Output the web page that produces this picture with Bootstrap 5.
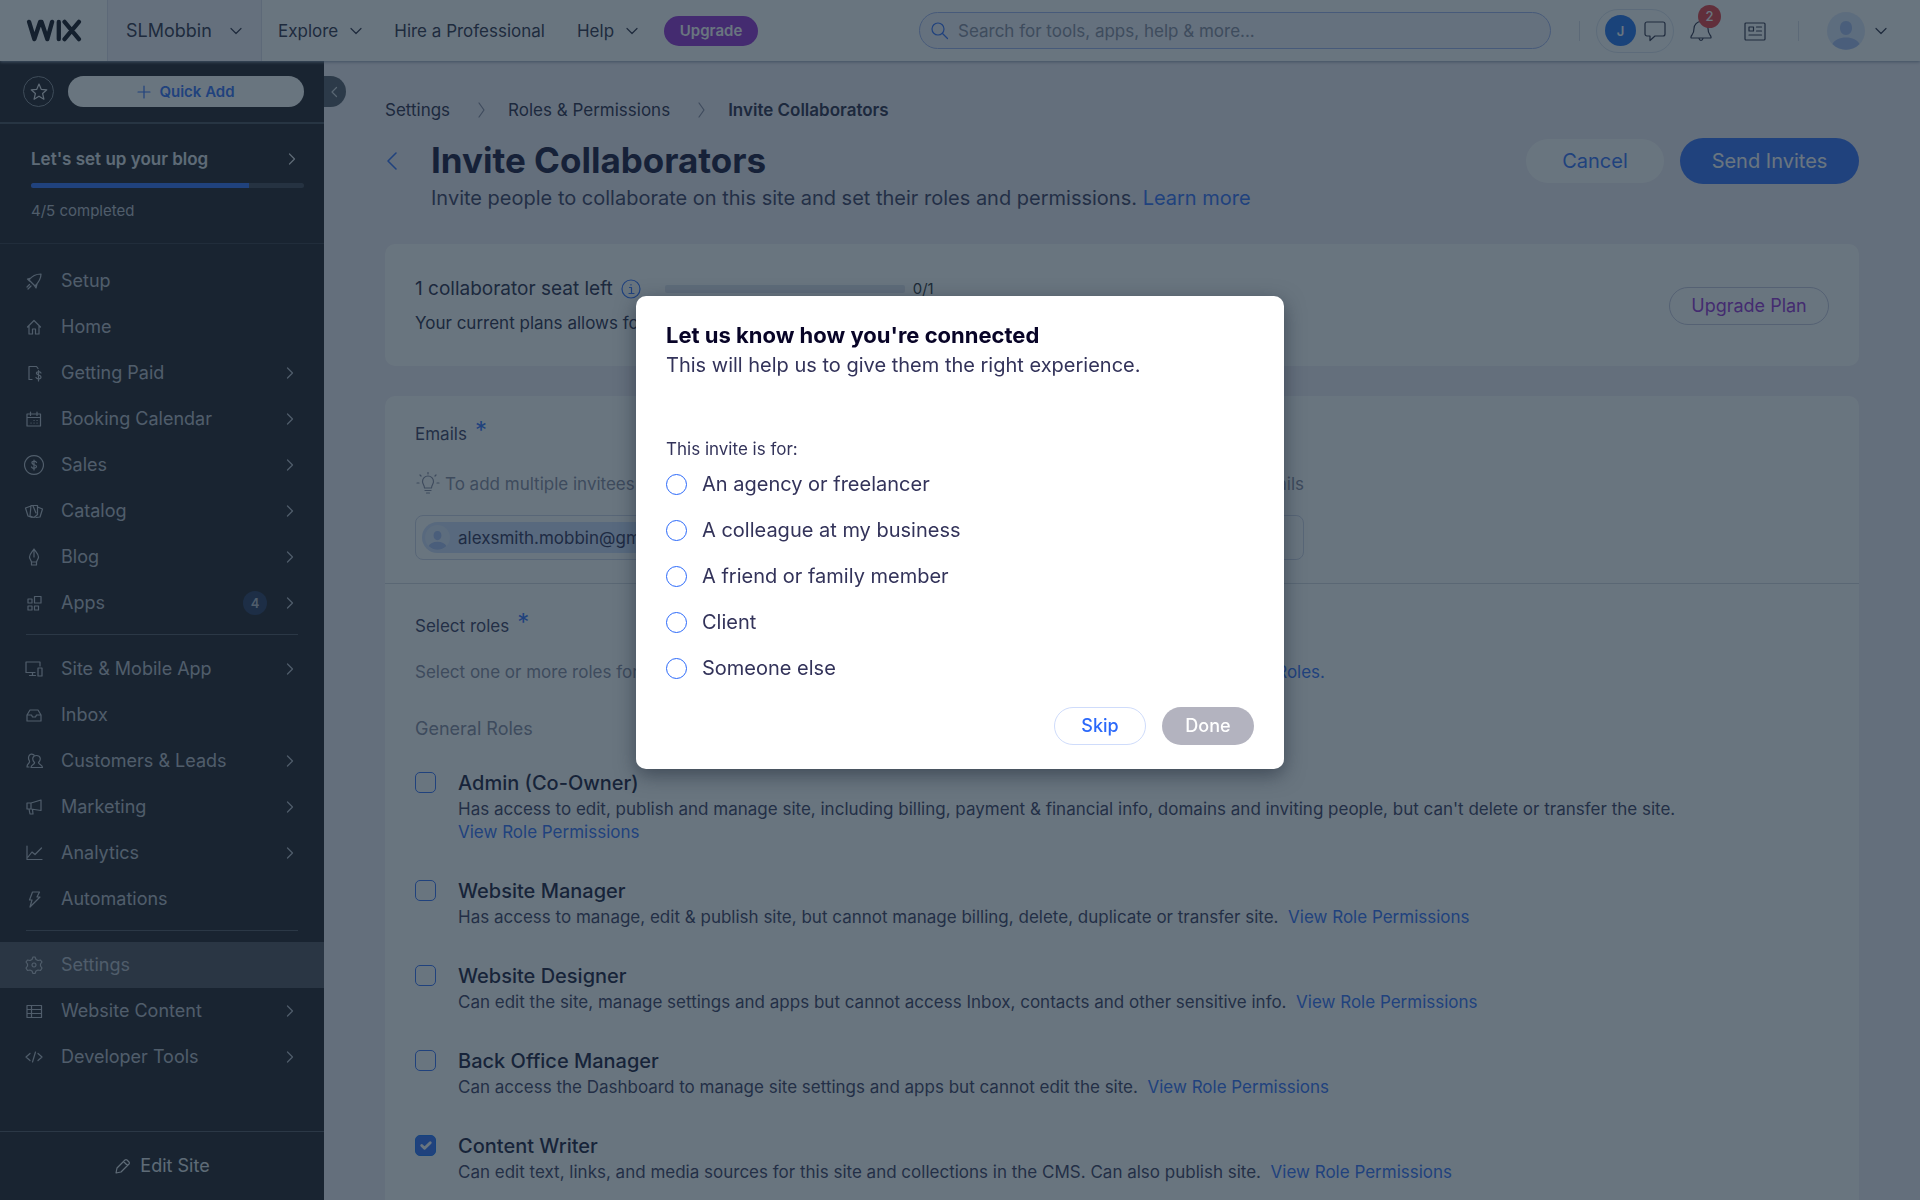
<!DOCTYPE html>
<html lang="en">
<head>
<meta charset="utf-8">
<meta name="viewport" content="width=device-width, initial-scale=1">
<title>Invite Collaborators</title>
<link rel="stylesheet" href="https://cdn.jsdelivr.net/npm/bootstrap@5.3.0/dist/css/bootstrap.min.css">
<style>
:root{--blue:#2b69fa;--ink:#14123a;--body:#33335a;--purple:#9226d2}
body{font-family:Inter,"Liberation Sans",sans-serif;font-size:17px;line-height:24px;color:var(--body);background:#f0ecf5}
a{color:var(--blue);text-decoration:none}
svg{fill:none;stroke:currentColor;stroke-width:1.2;stroke-linecap:round;stroke-linejoin:round;flex:none}
.chev{width:12px;height:12px}
.btn{--bs-btn-line-height:24px;border-radius:30px}
/* top bar */
.topbar{height:61px;background:#fff;box-shadow:0 1px 3px #8894ac;z-index:2;color:#26263f}
.topbar a{color:inherit}
.brandbox{width:107px}
.topbar .brandbox{color:#080814}
.sitebox{width:155px;background:#f3f1f9;border:solid #dcdcea;border-width:0 1px;padding:0 19px 0 18px;font-size:18px}
.upbtn{background:var(--purple);color:#fff;font-size:15px;font-weight:600;height:30px;width:94px;margin-left:26px}
.searchbox{width:632px;height:37px;border:1px solid #9db1f0;border-radius:19px;background:#f3f2fb;padding:0 10px}
.searchbox input{background:none;font-size:17px}
.searchbox input::placeholder{color:#82869c;opacity:1}
.vline{width:1px;height:20px;background:#d8dbe6}
.account{margin-left:32px;gap:28px}
.account a{gap:10px}
.top-end{padding-right:33px}
.chatpill{width:78px;height:44px;border:1px solid #dbe2ef;border-radius:22px}
.initial{width:31px;height:31px;border-radius:50%;background:#1a6cf0;color:#fff;font-size:13px;font-weight:600}
.count{top:-13px;left:8px;width:23px;height:23px;border-radius:50%;background:#e6333a;color:#fff;font-size:13px;font-weight:500}
/* side menu */
.side{width:324px;background:#17141c;color:#fff}
.side a{color:#b5b9c4}
.side-top{padding:15px 20px 15px 23px;gap:14px;border-bottom:2px solid #3e4450}
.starbtn{width:31px;height:31px;border:1px solid #80848e;color:#e0e0e6}
.quick{height:31px;background:#fff;color:var(--blue);font-size:15px;font-weight:600}
.setup-box{padding:23px 20px 20px 31px;border-bottom:1px solid #2c2d38}
.side .setup-title{color:#dfe0e6;font-weight:600;padding-right:6px}
.side .progress{height:5px;background:#3a3d49;margin-top:12px}
.side .progress-bar{background:var(--blue)}
.setup-note{font-size:15px;color:#b5b9c4;margin-top:11px}
.menu-group{padding-top:14px}
.menu-group a{height:46px;padding:0 28px 0 24px;font-size:18px;gap:17px}
.menu-group a.active{background:#484852}
.menu-line{margin:8px 26px 11px 26px;height:1px;background:#494d59}
.pillcount{width:24px;height:24px;border-radius:50%;background:#20305a;font-size:13px;font-weight:600}
.edit{border-top:1px solid #494d59;height:69px;font-size:18px}
.edit a{color:#dfe0e6}
.collapse-tab{left:0;top:15px;width:22px;height:31px;background:#4e5461;border-radius:0 16px 16px 0;color:#cfd3dc}
/* content */
.content{padding:37px 61px 0 61px}
.crumbs{color:#22203f;gap:20px}
.pagetitle{font-size:35px;line-height:45px;font-weight:700;color:#0c0930}
.back{width:46px;height:45px;color:var(--blue)}
.subtitle{font-size:20px;line-height:30px}
.cancel{width:138px;height:44px;background:#fff;color:var(--blue);font-size:20px}
.send{width:179px;height:46px;background:var(--blue);color:#fff;font-size:20px}
.panel{background:#fff;border-radius:10px}
.seat{padding:30px 30px 28px;margin-top:31px}
.seat-title{font-size:19px;line-height:30px;color:#20203f}
.seat-note{line-height:30px;color:#20203f}
.seat .progress{width:240px;height:8px;background:#dfe3ee;border-radius:2px}
.planbtn{width:160px;height:38px;border:1px solid #c3c4dc;color:var(--purple);font-size:18px}
.main-panel{margin-top:30px}
.sec1{padding:26px 30px 23px;border-bottom:1px solid #d3d7df}
.sec2{padding:30px}
.star{color:var(--blue);font-size:24px;line-height:18px}
.soft{color:#80839b}
.emails{max-width:889px}
.hint{margin-top:26px}
.tagbox{height:45px;margin-top:19px;border:1px solid #cdd2e6;border-radius:8px;padding:6px}
.tag{height:31px;border-radius:16px;background:#ccdcfb;color:#262650;padding:0 12px 0 3px;gap:8px}
.roles-note{max-width:910px;margin-top:22px}
.general{font-size:18px;margin:33px 0 27px}
.role{gap:22px;margin-bottom:32px}
.role-name{font-size:20px;line-height:30px;color:#101033;font-weight:500}
.role-text{line-height:23px}
.form-check-input{width:21px;height:21px;border:1px solid var(--blue);background-color:transparent}
.role .form-check-input{border-radius:5px;margin:4px 0 0}
.form-check-input:checked{background-color:var(--blue)}
/* dialog */
.shade{background:rgba(28,46,60,.66)}
.ask{width:648px;max-width:none;margin:296px auto 0}
.ask .modal-content{border:0;border-radius:10px;padding:24px 30px 24px;box-shadow:0 6px 20px rgba(20,30,45,.5);color:var(--body)}
.ask h2{font-size:22px;line-height:30px;font-weight:700;color:#080427;margin:0}
.ask-sub{font-size:20px;line-height:30px}
.ask-label{margin-top:57px;font-size:17px}
.choice{height:46px;gap:15px;font-size:20px}
.choice .form-check-input{margin:0}
.ask .btn{width:92px;height:38px;font-size:18px;font-weight:500}
.skip{border:1px solid #cfdcfb;color:var(--blue)}
.done,.done:disabled{background:#b3b3bf;color:#fff;border:0;opacity:1}
</style>
<script src="https://cdn.jsdelivr.net/npm/bootstrap@5.3.0/dist/js/bootstrap.bundle.min.js"></script>
</head>
<body class="vh-100 overflow-hidden d-flex flex-column">
<svg class="d-none">
<symbol id="down" viewBox="0 0 12 12"><path d="M1 3.500l5 5 5-5"/></symbol>
<symbol id="right" viewBox="0 0 12 12"><path d="M3.500 1l5 5-5 5"/></symbol>
<symbol id="person" viewBox="0 0 38 38"><circle cx="19" cy="19" r="19" fill="#dde6fb" stroke="none"/><path d="M19 9c-4 0-6 3-6 7s2.500 7 6 7 6-3 6-7-2-7-6-7zM5.500 32c2-4 7-6.500 13.500-6.500S30.500 28 32.500 32c-7 7.500-20 7.500-27 0z" fill="#a3bbf2" stroke="none"/></symbol>
</svg>
<header class="topbar d-flex align-items-center position-relative flex-shrink-0">
  <a href="#" class="brandbox d-flex justify-content-center" aria-label="Wix"><svg width="56" height="23" viewBox="0 0 58 24" style="stroke-width:4.500"><path d="M3 3l5.500 18L14.500 3h1.500l6 18L27 3M34 3v18M40 3l15 18M55 3L40 21"/></svg></a>
  <a href="#" class="sitebox d-flex align-items-center justify-content-between h-100">SLMobbin <svg class="chev"><use href="#down"/></svg></a>
  <nav class="d-flex align-items-center ps-3">
    <a href="#" class="d-flex align-items-center gap-2">Explore <svg class="chev ms-1"><use href="#down"/></svg></a>
    <a href="#" class="ms-4 ps-2">Hire a Professional</a>
    <a href="#" class="ms-4 ps-2 d-flex align-items-center gap-2">Help <svg class="chev ms-1"><use href="#down"/></svg></a>
    <button class="btn upbtn p-0" type="button">Upgrade</button>
  </nav>
  <div class="ms-auto d-flex align-items-center top-end">
    <div class="searchbox d-flex align-items-center gap-2 me-4">
      <svg width="20" height="20" style="color:#2b69fa"><circle cx="8" cy="8" r="6"/><path d="M12.500 12.500l5 5"/></svg>
      <input class="border-0 flex-grow-1 p-0" type="search" aria-label="Search" placeholder="Search for tools, apps, help &amp; more...">
    </div>
    <span class="vline ms-1 me-3"></span>
    <a href="#" class="chatpill d-flex align-items-center gap-2 ps-2"><span class="initial d-flex align-items-center justify-content-center">J</span><svg width="22" height="22"><path d="M3 2h16a2 2 0 0 1 2 2v10a2 2 0 0 1-2 2h-8l-5 4.500v-4.500H3a2 2 0 0 1-2-2V4a2 2 0 0 1 2-2z"/></svg></a>
    <a href="#" class="position-relative ms-3" aria-label="Notifications"><svg width="22" height="24"><path d="M1.500 19c-1 0-.5-2 .5-3 1.500-2 2-3 2-6.500a7 7 0 0 1 14 0c0 3.500.5 4.500 2 6.500 1 1 1.500 3 .5 3zM9 19.500c.5 2.500 3.500 2.500 4 0"/></svg><span class="count position-absolute d-flex align-items-center justify-content-center">2</span></a>
    <a href="#" class="ms-4 ps-2" aria-label="News"><svg width="22" height="22"><path d="M2 2h18a1 1 0 0 1 1 1v15a1 1 0 0 1-1 1H2a1 1 0 0 1-1-1V3a1 1 0 0 1 1-1zM5 6h4.500v4H5zM12.500 6h5M12.500 10h5M5 14h12.500"/></svg></a>
    <div class="account d-flex align-items-center"><span class="vline"></span>
    <a href="#" class="d-flex align-items-center" aria-label="Account"><svg width="38" height="38"><use href="#person"/></svg><svg class="chev"><use href="#down"/></svg></a></div>
  </div>
</header>
<div class="d-flex flex-grow-1 overflow-hidden">
  <aside class="side d-flex flex-column flex-shrink-0">
    <div class="side-top d-flex align-items-center">
      <button class="btn starbtn p-0 d-flex align-items-center justify-content-center" type="button" aria-label="Favorites"><svg width="20" height="20"><path d="M10 2l2.200 5.300 5.600.5-4.200 3.700 1.300 5.700-4.900-3-4.900 3 1.300-5.700L2.200 7.800l5.600-.5z"/></svg></button>
      <button class="btn quick p-0 flex-grow-1 d-flex align-items-center justify-content-center gap-2" type="button"><svg width="14" height="14"><path d="M7 1v12M1 7h12"/></svg>Quick Add</button>
    </div>
    <div class="setup-box">
      <a href="#" class="setup-title d-flex align-items-center justify-content-between">Let's set up your blog <svg class="chev"><use href="#right"/></svg></a>
      <div class="progress" role="progressbar" aria-label="Setup progress"><div class="progress-bar" style="width:80%"></div></div>
      <div class="setup-note">4/5 completed</div>
    </div>
    <nav class="menu-group" id="menu"></nav>
    <div class="edit mt-auto"><a href="#" class="h-100 d-flex align-items-center justify-content-center gap-2"><svg width="18" height="18"><path d="M2 16l1-5 8-8a1.500 1.500 0 0 1 2 0l2 2a1.500 1.500 0 0 1 0 2l-8 8zM9.500 4.500l4 4"/></svg>Edit Site</a></div>
  </aside>
  <main class="content flex-grow-1 position-relative">
    <button class="collapse-tab border-0 p-0 position-absolute d-flex align-items-center justify-content-center" type="button" aria-label="Collapse menu"><svg width="12" height="12"><path d="M7.500 1.500L3 6l4.500 4.500"/></svg></button>
    <nav class="crumbs d-flex align-items-center" aria-label="Breadcrumb"><a href="#" class="text-reset pe-1">Settings</a><svg width="14" height="16" class="soft"><path d="M5 1l5 7-5 7"/></svg><a href="#" class="text-reset pe-1">Roles &amp; Permissions</a><svg width="14" height="16" class="soft"><path d="M5 1l5 7-5 7"/></svg><span class="fw-semibold">Invite Collaborators</span></nav>
    <header class="d-flex align-items-start mt-3">
      <a href="#" class="back d-flex align-items-center" aria-label="Back"><svg width="14" height="20" style="stroke-width:1.600"><path d="M11 2l-8 8 8 8"/></svg></a>
      <div class="flex-grow-1">
        <h1 class="pagetitle m-0">Invite Collaborators</h1>
        <p class="subtitle m-0">Invite people to collaborate on this site and set their roles and permissions. <a href="#">Learn more</a></p>
      </div>
      <div class="d-flex align-items-center gap-3"><button class="btn cancel p-0" type="button">Cancel</button><button class="btn send p-0" type="button">Send Invites</button></div>
    </header>
    <section class="panel seat d-flex align-items-center justify-content-between">
      <div>
        <div class="d-flex align-items-center"><span class="seat-title me-2">1 collaborator seat left</span><svg width="20" height="20" style="color:#2b69fa"><circle cx="10" cy="10" r="9"/><path d="M8.500 8.500h2v6M8 14.500h5M10 5.500v.5"/></svg><div class="progress ms-4 me-2"></div><small class="text-dark">0/1</small></div>
        <div class="mt-1 seat-note">Your current plans allows for 1.</div>
      </div>
      <button class="btn planbtn p-0" type="button">Upgrade Plan</button>
    </section>
    <section class="panel main-panel">
      <div class="sec1">
        <div class="d-flex gap-2"><label for="mail">Emails</label><span class="star">*</span></div>
        <div class="emails hint d-flex justify-content-between soft"><span class="d-flex align-items-center gap-1"><svg width="26" height="24"><path d="M9.500 16c0-3-2-4-2-6.500a5.500 5.500 0 0 1 11 0c0 2.500-2 3.500-2 6.500zM10 18.500h6M11.500 21h3M13 .5V2M5 3l1 1M21 3l-1 1M2 11h2M22 11h2"/></svg>To add multiple invitees</span><span>1/1 emails</span></div>
        <div class="emails tagbox d-flex align-items-center"><span class="tag d-flex align-items-center"><svg width="25" height="25"><use href="#person" width="25" height="25"/></svg>alexsmith.mobbin@gmail.com</span><input id="mail" type="email" class="border-0 bg-transparent flex-grow-1 ms-2"></div>
      </div>
      <div class="sec2">
        <div class="d-flex gap-2"><span>Select roles</span><span class="star">*</span></div>
        <div class="roles-note d-flex justify-content-between soft"><span>Select one or more roles for them.</span><a href="#">Manage Roles.</a></div>
        <div class="soft general">General Roles</div>
        <div id="roles"></div>
      </div>
    </section>
  </main>
</div>
<div class="modal shade d-block" tabindex="-1" role="dialog" aria-modal="true" aria-labelledby="ask-title">
  <div class="modal-dialog ask"><form class="modal-content">
    <h2 id="ask-title">Let us know how you're connected</h2>
    <div class="ask-sub">This will help us to give them the right experience.</div>
    <div class="ask-label">This invite is for:</div>
    <div class="d-flex align-items-center choice"><input class="form-check-input" type="radio" name="who" id="w1"><label for="w1">An agency or freelancer</label></div>
    <div class="d-flex align-items-center choice"><input class="form-check-input" type="radio" name="who" id="w2"><label for="w2">A colleague at my business</label></div>
    <div class="d-flex align-items-center choice"><input class="form-check-input" type="radio" name="who" id="w3"><label for="w3">A friend or family member</label></div>
    <div class="d-flex align-items-center choice"><input class="form-check-input" type="radio" name="who" id="w4"><label for="w4">Client</label></div>
    <div class="d-flex align-items-center choice"><input class="form-check-input" type="radio" name="who" id="w5"><label for="w5">Someone else</label></div>
    <div class="d-flex justify-content-end gap-3 mt-3"><button class="btn skip p-0" type="button">Skip</button><button class="btn done p-0" type="button" disabled>Done</button></div>
  </form></div>
</div>
<script>
const menu=[
 ['Setup',0,'M8 12L4 8c3-4 7-6 12-6 0 5-2 8-6 12zM6 6L2.500 7l2 2M12 12l-1 4-2-3M4.500 12.500L2 15M6 14l-3 3'],
 ['Home',0,'M2.500 9L9 2.500 15.500 9M4 8v8h3.500v-5h3v5H14V8'],
 ['Getting Paid',1,'M7 15.500H4v-13h7.500l1.500 2M16 9c-1-2-5-1.500-4.500.5s4.500 1 4.500 3.500-4 2.500-5 .5M13.500 6.500v10.500'],
 ['Booking Calendar',1,'M2 4h13.500v12H2zM2 7.500h13.500M5.500 2v3.500M12 2v3.500M6 13h.1M9 13h.1M12 13h.1M9 10.500h.1M12 10.500h.1'],
 ['Sales',1,'M9-.4a9.400 9.400 0 1 0 .01 0zM11.500 6.500c-1-2-5-1.500-4.500.5s4.500 1.500 4.500 3.500-4 2.500-5 .5M9 4v10'],
 ['Catalog',1,'M6 3.500h6.500v9L9 15.500l-4-1.500zM6 4L.5 6 3 14l4 1.500M12.500 5l5 2-2.500 8-4 .5M8 4l3 7'],
 ['Blog',1,'M9 1c-2 3-4.500 5-4.500 8 0 2 1.500 3 2 5h5c.5-2 2-3 2-5 0-3-2.500-5-4.500-8zM9 2v7M6.500 14v3h5v-3'],
 ['Apps',1,'M3 5h4v4H3zM3 12h4v4H3zM9.500 12h4v4h-4zM9.500 2.500H16V9H9.500z',4],
 null,
 ['Site & Mobile App',1,'M10 12.500H1V2h14v4M4.500 15.500h6M7.500 12.500v3M13 8h4v8h-4z'],
 ['Inbox',0,'M2 9l3-5h8l3 5v6H2zM2 9h4.500l1 2h3l1-2H16'],
 ['Customers & Leads',1,'M6 15.500c0-3 4-3 3.500-5-3-3-2-7 2-7s5 4 2 7c0 2 4 2 4 5zM4 15H2c0-4 3-3 2.500-6C2 5 5 0 9 3'],
 ['Marketing',1,'M2 5h4l10-3v10.500L6 11H2zM6 5v6M4 11l1 5h3l-.5-4.500'],
 ['Analytics',1,'M2 2v13.500h15M3 13l4-5 3 2.500L16.500 4'],
 ['Automations',0,'M7.500 2h7l-2.500 5h3L5 17l2-7H4.500z'],
 null,
 ['Settings',0,'M9 7a2 2 0 1 0 .01 0zM7 3.500L8 1h2l1 2.500 2 1 2.500-.5 1.500 2-1.500 2v2l1.500 2-1.500 2.500-2.500-.5-2 1-1 2.500H8l-1-2.500-2-1-2.500.5L1 12l1.500-2V8L1 6l1.500-2 2.500.5z'],
 ['Website Content',1,'M2 3.500h14.500v12H2zM2 7.500h14.500M2 11.500h14.500M6.500 3.500v12'],
 ['Developer Tools',1,'M5 5.500L1 9l4 3.500M13 5.500L17 9l-4 3.500M10.500 4l-3 10']];
document.getElementById('menu').innerHTML=menu.map(m=>m?`<a href="#" class="d-flex align-items-center${m[0]=='Settings'?' active':''}"><svg width="20" height="20" viewBox="-1 -1 20 20">
<path d="${m[2]}"/></svg><span class="me-auto">${m[0].replace('&','&amp;')}</span>${m[3]?'<span class="pillcount d-flex align-items-center justify-content-center">4</span>':''}${m[1]?'<svg class="chev"><use href="#right"/></svg>':''}</a>`:'<div class="menu-line"></div>').join('');
const roles=[
 ['Admin (Co-Owner)',"Has access to edit, publish and manage site, including billing, payment &amp; financial info, domains and inviting people, but can't delete or transfer the site.",1],
 ['Website Manager','Has access to manage, edit &amp; publish site, but cannot manage billing, delete, duplicate or transfer site.'],
 ['Website Designer','Can edit the site, manage settings and apps but cannot access Inbox, contacts and other sensitive info.'],
 ['Back Office Manager','Can access the Dashboard to manage site settings and apps but cannot edit the site.'],
 ['Content Writer','Can edit text, links, and media sources for this site and collections in the CMS. Can also publish site.']];
document.getElementById('roles').innerHTML=roles.map((r,i)=>`<div class="role d-flex"><input class="form-check-input flex-shrink-0" type="checkbox" id="r${i}"${i==4?' checked':''}><div><label class="role-name d-block" for="r${i}">${r[0]}</label><div class="role-text">${r[1]}${r[2]?'<br>':'&nbsp; '}<a href="#">View Role Permissions</a></div></div></div>`).join('');
</script>
</body>
</html>
